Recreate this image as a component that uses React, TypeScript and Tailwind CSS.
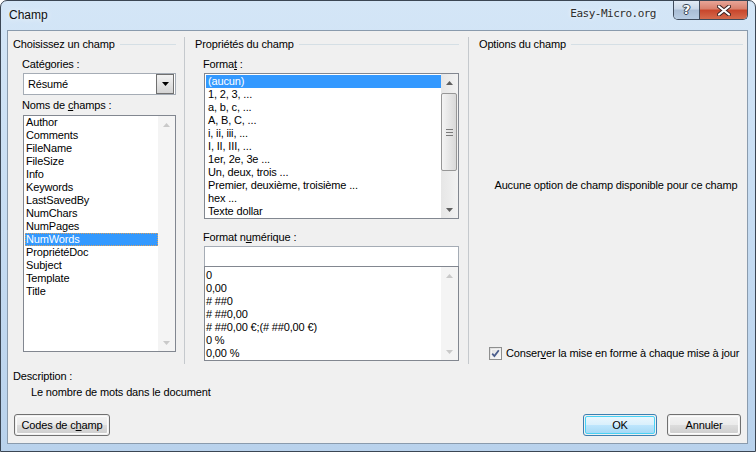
import React from "react";

const FONT = "font-['Liberation_Sans',Arial,sans-serif]";

function Tri({ dir, color }: { dir: "up" | "down"; color: string }) {
  return (
    <svg width="7" height="4" viewBox="0 0 7 4">
      <path d={dir === "up" ? "M0 4 L3.5 0 L7 4 Z" : "M0 0 L7 0 L3.5 4 Z"} fill={color} />
    </svg>
  );
}

function ScrollBar({ thumb, disabled }: { thumb?: { top: number; height: number }; disabled?: boolean }) {
  const c = disabled ? "#c9c9c9" : "#5f5f5f";
  return (
    <div className={`w-[17px] h-full flex flex-col shrink-0 ${disabled ? "bg-[#f4f4f4]" : "bg-gradient-to-r from-[#e6e6e6] to-[#f2f2f2]"}`}>
      <div className="h-[17px] flex items-center justify-center shrink-0">
        <Tri dir="up" color={c} />
      </div>
      <div className="flex-1 relative">
        {thumb && (
          <div
            className="absolute left-0 right-[1px] rounded-[2px] border border-[#979797] bg-gradient-to-r from-[#f4f4f4] to-[#d9d9d9] flex flex-col items-center justify-center gap-[2px]"
            style={{ top: thumb.top, height: thumb.height }}
          >
            <div className="w-[7px] h-px bg-[#7a7a7a]" />
            <div className="w-[7px] h-px bg-[#7a7a7a]" />
            <div className="w-[7px] h-px bg-[#7a7a7a]" />
          </div>
        )}
      </div>
      <div className="h-[17px] flex items-center justify-center shrink-0">
        <Tri dir="down" color={c} />
      </div>
    </div>
  );
}

function Heading({ text, pl, pr }: { text: string; pl: string; pr: string }) {
  return (
    <div className={`h-[15px] flex items-center ${pl} ${pr}`}>
      <span className="leading-[15px] whitespace-nowrap">{text}</span>
      <div className="flex-1 h-px bg-[#d5dfe5] ml-[5px]" />
    </div>
  );
}

function Btn({ children, w, focused }: { children: React.ReactNode; w: string; focused?: boolean }) {
  return (
    <div
      className={`${w} h-[22px] rounded-[3px] border ${
        focused ? "border-[#3c7fb1]" : "border-[#707070]"
      } p-px`}
    >
      <div
        className={`w-full h-full rounded-[2px] flex items-center justify-center ${
          focused
            ? "border border-[#48d2f5] bg-[linear-gradient(#eaf6fd_0%,#d9f0fc_50%,#bee6fd_50%,#a7d9f5_100%)]"
            : "border border-[#fcfcfc] bg-[linear-gradient(#f2f2f2_0%,#ebebeb_50%,#dddddd_50%,#cfcfcf_100%)]"
        }`}
      >
        {children}
      </div>
    </div>
  );
}

const names = [
  "Author",
  "Comments",
  "FileName",
  "FileSize",
  "Info",
  "Keywords",
  "LastSavedBy",
  "NumChars",
  "NumPages",
  "NumWords",
  "PropriétéDoc",
  "Subject",
  "Template",
  "Title",
];

const formats = [
  "(aucun)",
  "1, 2, 3, ...",
  "a, b, c, ...",
  "A, B, C, ...",
  "i, ii, iii, ...",
  "I, II, III, ...",
  "1er, 2e, 3e ...",
  "Un, deux, trois ...",
  "Premier, deuxième, troisième ...",
  "hex ...",
  "Texte dollar",
];

const numerics = ["0", "0,00", "# ##0", "# ##0,00", "# ##0,00 €;(# ##0,00 €)", "0 %", "0,00 %"];

export default function App() {
  return (
    <div className="w-[756px] h-[452px] bg-white overflow-hidden">
      <div
        className={`w-[756px] h-[452px] flex flex-col border border-[#3b4654] rounded-t-[7px] bg-gradient-to-b from-[#d4e6f7] via-[#c6dcf2] to-[#b9d2ec] ${FONT} text-[11px] tracking-[-0.15px] text-black`}
      >
        {/* Title bar */}
        <div className="h-[29px] flex items-start shrink-0">
          <div className="h-[28px] flex items-center pl-[8px] text-[12px] tracking-normal text-[#101010] [text-shadow:0_0_6px_#ffffff]">
            Champ
          </div>
          <div className="flex-1" />
          <div className="h-[27px] flex items-center font-['DejaVu_Sans_Mono',monospace] text-[11px] text-[#2e2e2e] tracking-[-0.5px] [text-shadow:0_0_4px_#ffffff]">
            Easy-Micro.org
          </div>
          <div className="ml-[17px] mr-[7px] flex h-[19px] rounded-b-[5px] border border-t-0 border-[#3f4b5b] overflow-hidden">
            <div className="w-[26px] h-full flex items-center justify-center border-r border-[#3f4b5b] bg-[linear-gradient(#e2ebf5_0%,#c9d7e7_45%,#a9bdd5_50%,#b8cde3_100%)] text-white font-['DejaVu_Sans',sans-serif] font-bold text-[13px] tracking-normal [text-shadow:0_0_1px_#2a3440,1px_0_0_#3a4656,-1px_0_0_#3a4656,0_1px_0_#3a4656,0_-1px_0_#3a4656]">
              ?
            </div>
            <div className="w-[47px] h-full flex items-center justify-center bg-[linear-gradient(#e8a598_0%,#d8806c_45%,#c8452b_50%,#d56b4d_100%)]">
              <svg width="14" height="11" viewBox="0 0 14 11">
                <path d="M2 1.5 L12 9.5 M12 1.5 L2 9.5" stroke="#3a2222" strokeWidth="4" strokeLinecap="round" />
                <path d="M2 1.5 L12 9.5 M12 1.5 L2 9.5" stroke="#ffffff" strokeWidth="2.2" strokeLinecap="round" />
              </svg>
            </div>
          </div>
        </div>

        {/* Frame + client */}
        <div className="flex-1 pl-[6px] pr-[7px] pb-[7px] flex">
          <div className="flex-1 border border-[#8a9bad] bg-[#f0f0f0] flex flex-col">
            {/* Top section */}
            <div className="mt-[6px] h-[327px] flex">
              {/* Column 1 */}
              <div className="w-[176px] flex flex-col">
                <Heading text="Choisissez un champ" pl="pl-[5px]" pr="pr-[8px]" />
                <div className="mt-[5px] h-[15px] leading-[15px] pl-[14px]">
                  Caté<span className="underline">g</span>ories :
                </div>
                <div className="mt-[1px] ml-[15px] w-[153px] h-[22px] border border-[#a5acb5] bg-white flex items-center p-px">
                  <div className="flex-1 pl-[3px] leading-[15px]">Résumé</div>
                  <div className="w-[18px] h-[20px] border border-[#707070] bg-gradient-to-b from-[#f3f3f3] to-[#d4d4d4] flex items-center justify-center">
                    <Tri dir="down" color="#000000" />
                  </div>
                </div>
                <div className="mt-[3px] h-[15px] leading-[15px] pl-[14px]">
                  Noms de <span className="underline">c</span>hamps :
                </div>
                <div className="mt-[2px] ml-[15px] w-[153px] h-[237px] border border-[#828790] bg-white flex">
                  <div className="flex-1 flex flex-col pl-px">
                    {names.map((n) => (
                      <div
                        key={n}
                        className={`h-[13px] leading-[13px] pl-[1px] whitespace-nowrap ${
                          n === "NumWords"
                            ? "bg-[#3399ff] text-white outline outline-1 outline-dotted outline-[#d9a060] -outline-offset-1"
                            : ""
                        }`}
                      >
                        {n}
                      </div>
                    ))}
                  </div>
                  <ScrollBar disabled />
                </div>
              </div>

              <div className="w-px bg-[#c5c9cd]" />

              {/* Column 2 */}
              <div className="w-[283px] flex flex-col">
                <Heading text="Propriétés du champ" pl="pl-[10px]" pr="pr-[9px]" />
                <div className="mt-[5px] h-[15px] leading-[15px] pl-[18px]">
                  Forma<span className="underline">t</span> :
                </div>
                <div className="mt-[1px] ml-[19px] w-[255px] h-[146px] border border-[#828790] bg-white flex">
                  <div className="flex-1 flex flex-col pl-px pt-px">
                    {formats.map((n, i) => (
                      <div
                        key={n}
                        className={`h-[13px] leading-[13px] pl-[2px] whitespace-nowrap ${
                          i === 0 ? "bg-[#3399ff] text-white" : ""
                        }`}
                      >
                        {n}
                      </div>
                    ))}
                  </div>
                  <ScrollBar thumb={{ top: 2, height: 78 }} />
                </div>
                <div className="mt-[11px] h-[15px] leading-[15px] pl-[18px]">
                  Format n<span className="underline">u</span>mérique :
                </div>
                <div className="mt-px ml-[19px] w-[255px] h-[20px] border border-b-0 border-[#a5acb5] bg-white" />
                <div className="ml-[19px] w-[255px] h-[95px] border border-[#828790] bg-white flex">
                  <div className="flex-1 flex flex-col pt-[2px]">
                    {numerics.map((n) => (
                      <div key={n} className="h-[13px] leading-[13px] pl-[1px] whitespace-pre">
                        {n}
                      </div>
                    ))}
                  </div>
                  <ScrollBar disabled />
                </div>
              </div>

              <div className="w-px bg-[#c5c9cd]" />

              {/* Column 3 */}
              <div className="flex-1 flex flex-col">
                <Heading text="Options du champ" pl="pl-[10px]" pr="pr-[4px]" />
                <div className="mt-[126px] h-[15px] leading-[15px] pl-[16px] text-center whitespace-nowrap">
                  Aucune option de champ disponible pour ce champ
                </div>
                <div className="mt-auto mb-[3px] pl-[20px] h-[15px] flex items-center gap-[4px]">
                  <div className="w-[13px] h-[13px] border border-[#8e8f8f] bg-gradient-to-br from-[#dcdcdc] to-[#fcfcfc] p-px relative">
                    <div className="w-full h-full border border-[#f4f4f4]" />
                    <svg className="absolute left-0 top-0" width="11" height="11" viewBox="0 0 11 11">
                      <path d="M2.2 5.6 L4.4 8 L8.8 2.2" fill="none" stroke="#4a5d8c" strokeWidth="1.8" />
                    </svg>
                  </div>
                  <span className="leading-[15px] whitespace-nowrap">
                    Conser<span className="underline">v</span>er la mise en forme à chaque mise à jour
                  </span>
                </div>
              </div>
            </div>

            {/* Bottom section */}
            <div className="mt-[5px] h-[15px] leading-[15px] pl-[5px]">Description :</div>
            <div className="mt-px h-[15px] leading-[15px] pl-[23px]">Le nombre de mots dans le document</div>
            <div className="mt-[14px] flex items-center pl-[6px] pr-[6px]">
              <Btn w="w-[96px]">
                Codes de c<span className="underline">h</span>amp
              </Btn>
              <div className="flex-1" />
              <Btn w="w-[74px]" focused>
                OK
              </Btn>
              <div className="w-[10px]" />
              <Btn w="w-[74px]">Annuler</Btn>
            </div>
          </div>
        </div>
      </div>
    </div>
  );
}
